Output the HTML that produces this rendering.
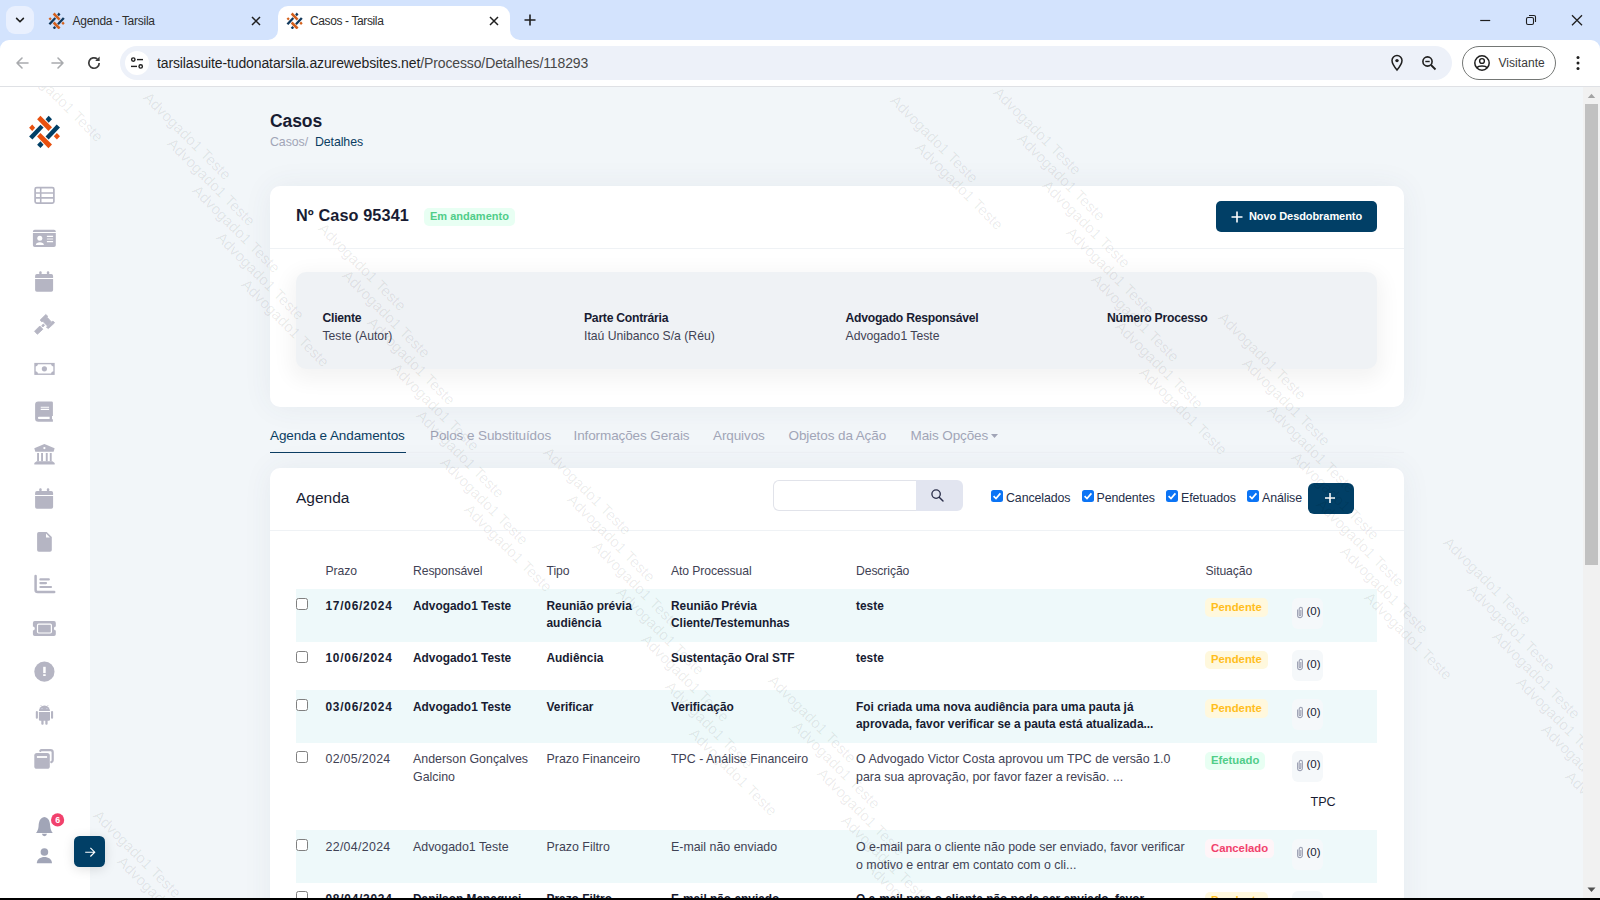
<!DOCTYPE html>
<html lang="pt-BR"><head><meta charset="utf-8"><title>Casos - Tarsila</title>
<style>
*{box-sizing:border-box}
html,body{margin:0;padding:0}
body{width:1600px;height:900px;overflow:hidden;position:relative;background:#fff;font-family:"Liberation Sans",sans-serif;color:#181c32}
.abs{position:absolute}
.t{position:absolute;white-space:nowrap;line-height:1}
/* chrome */
#tabstrip{left:0;top:0;width:1600px;height:52px;background:#d3e3fd}
#toolbar{left:0;top:40px;width:1600px;height:46px;background:#fff;border-top-left-radius:9px;border-top-right-radius:9px}
#tbline{left:0;top:86px;width:1600px;height:1px;background:#dfe1e5}
#url{left:120px;top:46px;width:1332px;height:34px;border-radius:17px;background:#edf1f9}
/* page */
#page{left:0;top:87px;width:1583px;height:811px;background:#f2f6f9;overflow:hidden}
#side{left:0;top:0;width:90px;height:811px;background:#fff}
.card{background:#fff;border-radius:10px;box-shadow:0 0 30px rgba(60,80,110,.065)}
.badge{position:absolute;border-radius:5px;font-weight:700;white-space:nowrap}
.ck{position:absolute;width:12px;height:12px;border:1px solid #808080;border-radius:2.5px;background:#fff}
.ckc{position:absolute;width:12px;height:12px;border-radius:2.5px;background:#0b74f5}
.row{position:absolute;left:26px;width:1081px}
.cell{position:absolute;white-space:nowrap}
.b{font-weight:700;font-size:11.9px;line-height:17px;color:#181c32}
.r{font-weight:400;font-size:12.4px;line-height:18px;color:#3f4254}
.att{position:absolute;left:996px;width:31px;height:31px;border-radius:6px;background:#f5f8fa}
.wm{position:absolute;white-space:nowrap;font-size:14.9px;letter-spacing:0.12px;line-height:1;color:rgba(0,0,0,.088);transform-origin:0 0;transform:rotate(45deg);pointer-events:none}
#bottom{left:0;top:898px;width:1600px;height:2px;background:#000}
#sb{left:1583px;top:87px;width:17px;height:811px;background:#f1f1f1}
</style></head>
<body>
<div id="tabstrip" class="abs"></div>
<div class="abs" style="left:6px;top:6px;width:28px;height:28px;border-radius:9px;background:#e9f0fe"></div>
<svg class="abs" style="left:14px;top:15px" width="12" height="10" viewBox="0 0 12 10"><path d="M2.6 3.4 L6 6.8 L9.4 3.4" fill="none" stroke="#1f1f1f" stroke-width="1.6" stroke-linecap="round" stroke-linejoin="round"/></svg>
<div id="toolbar" class="abs"></div>
<div class="abs" style="left:278px;top:6px;width:232px;height:34px;background:#fff;border-radius:10px 10px 0 0"></div>
<svg class="abs" style="left:268px;top:30px" width="10" height="10"><path d="M10 0 V10 H0 A10 10 0 0 0 10 0Z" fill="#fff"/></svg>
<svg class="abs" style="left:510px;top:30px" width="10" height="10"><path d="M0 0 V10 H10 A10 10 0 0 1 0 0Z" fill="#fff"/></svg>
<div id="tbline" class="abs"></div>
<div id="url" class="abs"></div>
<svg class="abs" style="left:47.6px;top:11.6px" width="17.2" height="17.2" viewBox="4 4.6 33 33"><polygon points="16.44,5.78 13.11,9.33 24.44,20.89 28.00,17.33" fill="#d4601c"/><polygon points="16.44,22.89 13.11,26.44 24.44,38.22 28.00,34.44" fill="#d4601c"/><polygon points="16.44,14.67 5.11,26.44 8.44,29.56 19.56,17.56" fill="#12395c"/><polygon points="32.67,14.44 21.56,26.44 24.67,29.56 36.00,17.56" fill="#12395c"/><polygon points="24.67,5.78 21.56,9.33 24.67,12.67 28.00,9.33" fill="#12395c"/><polygon points="16.44,31.33 13.11,34.67 16.44,38.00 19.56,34.67" fill="#12395c"/><polygon points="8.22,14.44 5.11,17.78 8.22,20.89 11.11,17.78" fill="#d4601c"/><polygon points="32.89,22.89 29.78,26.22 32.89,29.56 36.00,26.22" fill="#d4601c"/></svg>
<svg class="abs" style="left:285.6px;top:11.6px" width="17.2" height="17.2" viewBox="4 4.6 33 33"><polygon points="16.44,5.78 13.11,9.33 24.44,20.89 28.00,17.33" fill="#d4601c"/><polygon points="16.44,22.89 13.11,26.44 24.44,38.22 28.00,34.44" fill="#d4601c"/><polygon points="16.44,14.67 5.11,26.44 8.44,29.56 19.56,17.56" fill="#12395c"/><polygon points="32.67,14.44 21.56,26.44 24.67,29.56 36.00,17.56" fill="#12395c"/><polygon points="24.67,5.78 21.56,9.33 24.67,12.67 28.00,9.33" fill="#12395c"/><polygon points="16.44,31.33 13.11,34.67 16.44,38.00 19.56,34.67" fill="#12395c"/><polygon points="8.22,14.44 5.11,17.78 8.22,20.89 11.11,17.78" fill="#d4601c"/><polygon points="32.89,22.89 29.78,26.22 32.89,29.56 36.00,26.22" fill="#d4601c"/></svg>
<div class="t" style="left:72.5px;top:15px;font-size:12px;color:#2e2e2e;letter-spacing:-0.27px">Agenda - Tarsila</div>
<div class="t" style="left:310px;top:15px;font-size:12px;color:#2e2e2e;letter-spacing:-0.38px">Casos - Tarsila</div>
<svg class="abs" style="left:248px;top:12.5px" width="16" height="16"><path d="M4 4 L12 12 M12 4 L4 12" stroke="#1f1f1f" stroke-width="1.5" fill="none"/></svg>
<svg class="abs" style="left:486px;top:12.5px" width="16" height="16"><path d="M4 4 L12 12 M12 4 L4 12" stroke="#1f1f1f" stroke-width="1.5" fill="none"/></svg>
<svg class="abs" style="left:522px;top:12px" width="16" height="16"><path d="M8 2.5 V13.5 M2.5 8 H13.5" stroke="#1f1f1f" stroke-width="1.6" fill="none"/></svg>
<svg class="abs" style="left:1478px;top:12px" width="16" height="16"><path d="M2.2 8.5 H12.2" stroke="#1f1f1f" stroke-width="1.2"/></svg>
<svg class="abs" style="left:1523px;top:12px" width="16" height="16"><rect x="3.5" y="5.5" width="7" height="7" rx="1.5" fill="none" stroke="#1f1f1f" stroke-width="1.1"/><path d="M6 3.5 H11 A1.5 1.5 0 0 1 12.5 5 V10" fill="none" stroke="#1f1f1f" stroke-width="1.1"/></svg>
<svg class="abs" style="left:1568px;top:12px" width="18" height="16"><path d="M4 3.2 L14 13.2 M14 3.2 L4 13.2" stroke="#1f1f1f" stroke-width="1.25"/></svg>
<svg class="abs" style="left:14px;top:55px" width="16" height="16"><path d="M14 8 H3 M8 3 L3 8 L8 13" fill="none" stroke="#a9abae" stroke-width="1.6" stroke-linecap="round" stroke-linejoin="round"/></svg>
<svg class="abs" style="left:50px;top:55px" width="16" height="16"><path d="M2 8 H13 M8 3 L13 8 L8 13" fill="none" stroke="#a9abae" stroke-width="1.6" stroke-linecap="round" stroke-linejoin="round"/></svg>
<svg class="abs" style="left:85px;top:54px" width="18" height="18" viewBox="0 0 18 18"><path d="M14.2 9 A5.2 5.2 0 1 1 12.3 5" fill="none" stroke="#3c3c3c" stroke-width="1.7"/><path d="M14.6 2.6 V7 H10.2 Z" fill="#3c3c3c"/></svg>
<div class="abs" style="left:125px;top:51px;width:24px;height:24px;border-radius:12px;background:#fff"></div>
<svg class="abs" style="left:129px;top:55px" width="16" height="16" viewBox="0 0 16 16"><circle cx="4.3" cy="4.6" r="1.7" fill="none" stroke="#1f1f1f" stroke-width="1.4"/><path d="M8 4.6 H14" stroke="#1f1f1f" stroke-width="1.4"/><circle cx="11.7" cy="11.4" r="1.7" fill="none" stroke="#1f1f1f" stroke-width="1.4"/><path d="M2 11.4 H8" stroke="#1f1f1f" stroke-width="1.4"/></svg>
<div class="t" style="left:157px;top:55.5px;font-size:14px;color:#1f1f1f;letter-spacing:-0.12px"><span>tarsilasuite-tudonatarsila.azurewebsites.net</span><span style="color:#474747">/Processo/Detalhes/118293</span></div>
<svg class="abs" style="left:1389px;top:54px" width="16" height="18" viewBox="0 0 16 18"><path d="M8 1.5 A5 5 0 0 1 13 6.5 C13 10 8 16 8 16 C8 16 3 10 3 6.5 A5 5 0 0 1 8 1.5Z" fill="none" stroke="#1f1f1f" stroke-width="1.5"/><circle cx="8" cy="6.6" r="1.7" fill="#1f1f1f"/></svg>
<svg class="abs" style="left:1420px;top:54px" width="18" height="18" viewBox="0 0 18 18"><circle cx="7.5" cy="7.5" r="4.6" fill="none" stroke="#1f1f1f" stroke-width="1.6"/><path d="M11 11 L15.5 15.5" stroke="#1f1f1f" stroke-width="1.8"/><path d="M5.3 7.5 H9.7" stroke="#1f1f1f" stroke-width="1.4"/></svg>
<div class="abs" style="left:1462px;top:46px;width:94px;height:34px;border-radius:17px;border:1px solid #747775;background:#fff"></div>
<svg class="abs" style="left:1473px;top:54px" width="18" height="18" viewBox="0 0 18 18"><circle cx="9" cy="9" r="7.2" fill="none" stroke="#1f1f1f" stroke-width="1.5"/><circle cx="9" cy="7" r="2.4" fill="none" stroke="#1f1f1f" stroke-width="1.4"/><path d="M3.9 13.8 C5.5 11.4 12.5 11.4 14.1 13.8" fill="none" stroke="#1f1f1f" stroke-width="1.4"/></svg>
<div class="t" style="left:1498.5px;top:57px;font-size:12px;color:#3a3a3a;letter-spacing:0.05px">Visitante</div>
<svg class="abs" style="left:1570px;top:54px" width="16" height="18"><circle cx="8" cy="3.5" r="1.5" fill="#1f1f1f"/><circle cx="8" cy="9" r="1.5" fill="#1f1f1f"/><circle cx="8" cy="14.5" r="1.5" fill="#1f1f1f"/></svg>
<div id="page" class="abs">
<div class="abs card" style="left:270px;top:99px;width:1134px;height:221px"></div>
<div class="abs card" style="left:270px;top:381px;width:1134px;height:600px"></div>
<div id="side" class="abs"></div>
<div class="t" style="left:270px;top:26px;font-size:17.5px;font-weight:700;color:#181c32;letter-spacing:-0.1px;">Casos</div>
<div class="t" style="left:270px;top:49px;font-size:12.35px;font-weight:400;color:#a1a5b7;letter-spacing:-0.07px;">Casos/</div>
<div class="t" style="left:315px;top:49px;font-size:12.35px;font-weight:400;color:#0b3d62;letter-spacing:-0.09px;">Detalhes</div>
<div class="t" style="left:296px;top:120px;font-size:16.25px;font-weight:700;color:#181c32;letter-spacing:0.1px;">Nº Caso 95341</div>
<div class="badge" style="left:424px;top:120.5px;width:90.5px;height:18px;background:#e8fff3"></div>
<div class="t" style="left:430px;top:124px;font-size:11px;font-weight:700;color:#50cd89;letter-spacing:0px;">Em andamento</div>
<div class="abs" style="left:1216px;top:114px;width:161px;height:31px;border-radius:5px;background:#013f66"></div>
<svg class="abs" style="left:1231px;top:124px" width="12" height="12"><path d="M6 0.5 V11.5 M0.5 6 H11.5" stroke="#fff" stroke-width="1.6"/></svg>
<div class="t" style="left:1249px;top:124px;font-size:11px;font-weight:700;color:#fff;letter-spacing:-0.07px;">Novo Desdobramento</div>
<div class="abs" style="left:270px;top:161px;width:1134px;height:1px;background:#eff2f5"></div>
<div class="abs" style="left:296px;top:185px;width:1081px;height:97px;border-radius:10px;background:#eff2f5;box-shadow:0 6px 20px 6px rgba(0,0,0,.047)"></div>
<div class="t" style="left:322.5px;top:225px;font-size:12.2px;font-weight:700;color:#181c32;letter-spacing:-0.26px;">Cliente</div>
<div class="t" style="left:322.5px;top:243px;font-size:12.2px;font-weight:400;color:#3f4254;letter-spacing:0px;">Teste (Autor)</div>
<div class="t" style="left:584px;top:225px;font-size:12.2px;font-weight:700;color:#181c32;letter-spacing:-0.26px;">Parte Contrária</div>
<div class="t" style="left:584px;top:243px;font-size:12.2px;font-weight:400;color:#3f4254;letter-spacing:0px;">Itaú Unibanco S/a (Réu)</div>
<div class="t" style="left:845.5px;top:225px;font-size:12.2px;font-weight:700;color:#181c32;letter-spacing:-0.26px;">Advogado Responsável</div>
<div class="t" style="left:845.5px;top:243px;font-size:12.2px;font-weight:400;color:#3f4254;letter-spacing:0px;">Advogado1 Teste</div>
<div class="t" style="left:1107px;top:225px;font-size:12.2px;font-weight:700;color:#181c32;letter-spacing:-0.26px;">Número Processo</div>
<div class="abs" style="left:270px;top:365px;width:1134px;height:1px;background:#eceff3"></div>
<div class="t" style="left:270px;top:342px;font-size:13.5px;font-weight:400;color:#0b3d62;letter-spacing:-0.1px;">Agenda e Andamentos</div>
<div class="t" style="left:430px;top:342px;font-size:13.5px;font-weight:400;color:#a1a5b7;letter-spacing:-0.1px;">Polos e Substituídos</div>
<div class="t" style="left:573.5px;top:342px;font-size:13.5px;font-weight:400;color:#a1a5b7;letter-spacing:-0.1px;">Informações Gerais</div>
<div class="t" style="left:713px;top:342px;font-size:13.5px;font-weight:400;color:#a1a5b7;letter-spacing:-0.1px;">Arquivos</div>
<div class="t" style="left:788.5px;top:342px;font-size:13.5px;font-weight:400;color:#a1a5b7;letter-spacing:-0.1px;">Objetos da Ação</div>
<div class="t" style="left:910.5px;top:342px;font-size:13.5px;font-weight:400;color:#a1a5b7;letter-spacing:-0.1px;">Mais Opções</div>
<div class="abs" style="left:270px;top:364.5px;width:136px;height:1.5px;background:#0b3d62"></div>
<svg class="abs" style="left:991px;top:347px" width="7" height="4"><path d="M0 0 H7 L3.5 4Z" fill="#a1a5b7"/></svg>
<div class="t" style="left:296px;top:403px;font-size:15.5px;font-weight:400;color:#181c32;letter-spacing:0px;">Agenda</div>
<div class="abs" style="left:773px;top:393px;width:144px;height:31px;border:1px solid #e1e3ea;border-right:none;border-radius:6px 0 0 6px;background:#fff"></div>
<div class="abs" style="left:916px;top:393px;width:47px;height:31px;border-radius:0 6px 6px 0;background:#e2e5f0"></div>
<svg class="abs" style="left:930px;top:401px" width="15" height="15" viewBox="0 0 15 15"><circle cx="6.1" cy="6.1" r="4.2" fill="none" stroke="#2b2f4a" stroke-width="1.35"/><path d="M9.2 9.2 L13 13" stroke="#2b2f4a" stroke-width="1.45" stroke-linecap="round"/></svg>
<div class="ckc" style="left:991px;top:402.5px"></div><svg class="abs" style="left:991px;top:402.5px" width="12" height="12"><path d="M2.6 6.2 L5 8.6 L9.4 3.4" fill="none" stroke="#fff" stroke-width="1.7"/></svg>
<div class="t" style="left:1006px;top:404.5px;font-size:12.4px;font-weight:400;color:#252f4a;letter-spacing:-0.1px;">Cancelados</div>
<div class="ckc" style="left:1082px;top:402.5px"></div><svg class="abs" style="left:1082px;top:402.5px" width="12" height="12"><path d="M2.6 6.2 L5 8.6 L9.4 3.4" fill="none" stroke="#fff" stroke-width="1.7"/></svg>
<div class="t" style="left:1096.5px;top:404.5px;font-size:12.4px;font-weight:400;color:#252f4a;letter-spacing:-0.1px;">Pendentes</div>
<div class="ckc" style="left:1166px;top:402.5px"></div><svg class="abs" style="left:1166px;top:402.5px" width="12" height="12"><path d="M2.6 6.2 L5 8.6 L9.4 3.4" fill="none" stroke="#fff" stroke-width="1.7"/></svg>
<div class="t" style="left:1181px;top:404.5px;font-size:12.4px;font-weight:400;color:#252f4a;letter-spacing:-0.1px;">Efetuados</div>
<div class="ckc" style="left:1247px;top:402.5px"></div><svg class="abs" style="left:1247px;top:402.5px" width="12" height="12"><path d="M2.6 6.2 L5 8.6 L9.4 3.4" fill="none" stroke="#fff" stroke-width="1.7"/></svg>
<div class="t" style="left:1262px;top:404.5px;font-size:12.4px;font-weight:400;color:#252f4a;letter-spacing:-0.1px;">Análise</div>
<div class="abs" style="left:1308px;top:396px;width:46px;height:31px;border-radius:6px;background:#013f66"></div>
<svg class="abs" style="left:1324px;top:405px" width="12" height="12"><path d="M6 1 V11 M1 6 H11" stroke="#fff" stroke-width="1.6"/></svg>
<div class="abs" style="left:270px;top:443px;width:1134px;height:1px;background:#eff2f5"></div>
<div class="t" style="left:325.5px;top:478px;font-size:12.2px;font-weight:400;color:#3f4254;letter-spacing:-0.1px;">Prazo</div>
<div class="t" style="left:413px;top:478px;font-size:12.2px;font-weight:400;color:#3f4254;letter-spacing:-0.1px;">Responsável</div>
<div class="t" style="left:546.5px;top:478px;font-size:12.2px;font-weight:400;color:#3f4254;letter-spacing:-0.1px;">Tipo</div>
<div class="t" style="left:671px;top:478px;font-size:12.2px;font-weight:400;color:#3f4254;letter-spacing:-0.1px;">Ato Processual</div>
<div class="t" style="left:856px;top:478px;font-size:12.2px;font-weight:400;color:#3f4254;letter-spacing:-0.1px;">Descrição</div>
<div class="t" style="left:1205.5px;top:478px;font-size:12.2px;font-weight:400;color:#3f4254;letter-spacing:-0.1px;">Situação</div>
<div class="abs" style="left:296px;top:502.25px;width:1081px;height:52.5px;background:#eef9fa"></div>
<div class="ck" style="left:296px;top:511.04999999999995px"></div>
<div class="cell b" style="left:325.5px;top:510.75px;letter-spacing:0.75px;">17/06/2024</div>
<div class="cell b" style="left:413px;top:510.75px;">Advogado1 Teste</div>
<div class="cell b" style="left:546.5px;top:510.75px;">Reunião prévia<br>audiência</div>
<div class="cell b" style="left:671px;top:510.75px;">Reunião Prévia<br>Cliente/Testemunhas</div>
<div class="cell b" style="left:856px;top:510.75px;">teste</div>
<div class="badge" style="left:1205px;top:511.25px;width:62.5px;height:18.5px;background:#fff8dd"></div>
<div class="t" style="left:1211px;top:514.75px;font-size:11.3px;font-weight:700;color:#ffbe1c;letter-spacing:0px;">Pendente</div>
<div class="att" style="left:1292px;top:510.75px"></div>
<svg class="abs" style="left:1296px;top:518.55px" width="8" height="13" viewBox="0 0 8 13"><path d="M1.6 3.5 V9.2 A2.4 2.4 0 0 0 6.4 9.2 V3 A1.6 1.6 0 0 0 3.2 3 V8.8 A0.8 0.8 0 0 0 4.8 8.8 V4" fill="none" stroke="#9ca0b3" stroke-width="1.1"/></svg>
<div class="t" style="left:1306.5px;top:519.15px;font-size:11.5px;font-weight:400;color:#181c32;letter-spacing:0px;">(0)</div>
<div class="ck" style="left:296px;top:563.55px"></div>
<div class="cell b" style="left:325.5px;top:563.25px;letter-spacing:0.75px;">10/06/2024</div>
<div class="cell b" style="left:413px;top:563.25px;">Advogado1 Teste</div>
<div class="cell b" style="left:546.5px;top:563.25px;">Audiência</div>
<div class="cell b" style="left:671px;top:563.25px;">Sustentação Oral STF</div>
<div class="cell b" style="left:856px;top:563.25px;">teste</div>
<div class="badge" style="left:1205px;top:563.75px;width:62.5px;height:18.5px;background:#fff8dd"></div>
<div class="t" style="left:1211px;top:567.25px;font-size:11.3px;font-weight:700;color:#ffbe1c;letter-spacing:0px;">Pendente</div>
<div class="att" style="left:1292px;top:563.25px"></div>
<svg class="abs" style="left:1296px;top:571.05px" width="8" height="13" viewBox="0 0 8 13"><path d="M1.6 3.5 V9.2 A2.4 2.4 0 0 0 6.4 9.2 V3 A1.6 1.6 0 0 0 3.2 3 V8.8 A0.8 0.8 0 0 0 4.8 8.8 V4" fill="none" stroke="#9ca0b3" stroke-width="1.1"/></svg>
<div class="t" style="left:1306.5px;top:571.65px;font-size:11.5px;font-weight:400;color:#181c32;letter-spacing:0px;">(0)</div>
<div class="abs" style="left:296px;top:603px;width:1081px;height:52.5px;background:#eef9fa"></div>
<div class="ck" style="left:296px;top:611.8px"></div>
<div class="cell b" style="left:325.5px;top:611.5px;letter-spacing:0.75px;">03/06/2024</div>
<div class="cell b" style="left:413px;top:611.5px;">Advogado1 Teste</div>
<div class="cell b" style="left:546.5px;top:611.5px;">Verificar</div>
<div class="cell b" style="left:671px;top:611.5px;">Verificação</div>
<div class="cell b" style="left:856px;top:611.5px;">Foi criada uma nova audiência para uma pauta já<br>aprovada, favor verificar se a pauta está atualizada...</div>
<div class="badge" style="left:1205px;top:612px;width:62.5px;height:18.5px;background:#fff8dd"></div>
<div class="t" style="left:1211px;top:615.5px;font-size:11.3px;font-weight:700;color:#ffbe1c;letter-spacing:0px;">Pendente</div>
<div class="att" style="left:1292px;top:611.5px"></div>
<svg class="abs" style="left:1296px;top:619.3px" width="8" height="13" viewBox="0 0 8 13"><path d="M1.6 3.5 V9.2 A2.4 2.4 0 0 0 6.4 9.2 V3 A1.6 1.6 0 0 0 3.2 3 V8.8 A0.8 0.8 0 0 0 4.8 8.8 V4" fill="none" stroke="#9ca0b3" stroke-width="1.1"/></svg>
<div class="t" style="left:1306.5px;top:619.9px;font-size:11.5px;font-weight:400;color:#181c32;letter-spacing:0px;">(0)</div>
<div class="ck" style="left:296px;top:664.3px"></div>
<div class="cell r" style="left:325.5px;top:663.0px;letter-spacing:0.3px;">02/05/2024</div>
<div class="cell r" style="left:413px;top:663.0px;">Anderson Gonçalves<br>Galcino</div>
<div class="cell r" style="left:546.5px;top:663.0px;">Prazo Financeiro</div>
<div class="cell r" style="left:671px;top:663.0px;">TPC - Análise Financeiro</div>
<div class="cell r" style="left:856px;top:663.0px;">O Advogado Victor Costa aprovou um TPC de versão 1.0<br>para sua aprovação, por favor fazer a revisão. ...</div>
<div class="badge" style="left:1205px;top:664.5px;width:60px;height:18.5px;background:#e8fff3"></div>
<div class="t" style="left:1211px;top:668.0px;font-size:11.3px;font-weight:700;color:#50cd89;letter-spacing:0px;">Efetuado</div>
<div class="att" style="left:1292px;top:664.0px"></div>
<svg class="abs" style="left:1296px;top:671.8px" width="8" height="13" viewBox="0 0 8 13"><path d="M1.6 3.5 V9.2 A2.4 2.4 0 0 0 6.4 9.2 V3 A1.6 1.6 0 0 0 3.2 3 V8.8 A0.8 0.8 0 0 0 4.8 8.8 V4" fill="none" stroke="#9ca0b3" stroke-width="1.1"/></svg>
<div class="t" style="left:1306.5px;top:672.4px;font-size:11.5px;font-weight:400;color:#181c32;letter-spacing:0px;">(0)</div>
<div class="t" style="left:1310.5px;top:708.5px;font-size:12.6px;font-weight:400;color:#181c32;letter-spacing:0px;">TPC</div>
<div class="abs" style="left:296px;top:743px;width:1081px;height:52.5px;background:#eef9fa"></div>
<div class="ck" style="left:296px;top:751.8px"></div>
<div class="cell r" style="left:325.5px;top:751px;letter-spacing:0.3px;">22/04/2024</div>
<div class="cell r" style="left:413px;top:751px;">Advogado1 Teste</div>
<div class="cell r" style="left:546.5px;top:751px;">Prazo Filtro</div>
<div class="cell r" style="left:671px;top:751px;">E-mail não enviado</div>
<div class="cell r" style="left:856px;top:751px;">O e-mail para o cliente não pode ser enviado, favor verificar<br>o motivo e entrar em contato com o cli...</div>
<div class="badge" style="left:1205px;top:752px;width:68.5px;height:18.5px;background:#fff5f8"></div>
<div class="t" style="left:1211px;top:755.5px;font-size:11.3px;font-weight:700;color:#f1416c;letter-spacing:0px;">Cancelado</div>
<div class="att" style="left:1292px;top:751.5px"></div>
<svg class="abs" style="left:1296px;top:759.3px" width="8" height="13" viewBox="0 0 8 13"><path d="M1.6 3.5 V9.2 A2.4 2.4 0 0 0 6.4 9.2 V3 A1.6 1.6 0 0 0 3.2 3 V8.8 A0.8 0.8 0 0 0 4.8 8.8 V4" fill="none" stroke="#9ca0b3" stroke-width="1.1"/></svg>
<div class="t" style="left:1306.5px;top:759.9px;font-size:11.5px;font-weight:400;color:#181c32;letter-spacing:0px;">(0)</div>
<div class="ck" style="left:296px;top:804.3px"></div>
<div class="cell b" style="left:325.5px;top:804.0px;letter-spacing:0.75px;">08/04/2024</div>
<div class="cell b" style="left:413px;top:804.0px;">Danilson Meneguci</div>
<div class="cell b" style="left:546.5px;top:804.0px;">Prazo Filtro</div>
<div class="cell b" style="left:671px;top:804.0px;">E-mail não enviado</div>
<div class="cell b" style="left:856px;top:804.0px;">O e-mail para o cliente não pode ser enviado, favor<br>verificar o motivo</div>
<div class="badge" style="left:1205px;top:804.5px;width:62.5px;height:18.5px;background:#fff8dd"></div>
<div class="t" style="left:1211px;top:808.0px;font-size:11.3px;font-weight:700;color:#ffbe1c;letter-spacing:0px;">Pendente</div>
<div class="att" style="left:1292px;top:804.0px"></div>
<svg class="abs" style="left:1296px;top:811.8px" width="8" height="13" viewBox="0 0 8 13"><path d="M1.6 3.5 V9.2 A2.4 2.4 0 0 0 6.4 9.2 V3 A1.6 1.6 0 0 0 3.2 3 V8.8 A0.8 0.8 0 0 0 4.8 8.8 V4" fill="none" stroke="#9ca0b3" stroke-width="1.1"/></svg>
<div class="t" style="left:1306.5px;top:812.4px;font-size:11.5px;font-weight:400;color:#181c32;letter-spacing:0px;">(0)</div>
<svg class="abs" style="left:24px;top:23px" width="40" height="40" viewBox="0 0 40 40"><polygon points="16.44,5.78 13.11,9.33 24.44,20.89 28.00,17.33" fill="#e8500f"/><polygon points="16.44,22.89 13.11,26.44 24.44,38.22 28.00,34.44" fill="#e8500f"/><polygon points="16.44,14.67 5.11,26.44 8.44,29.56 19.56,17.56" fill="#013f66"/><polygon points="32.67,14.44 21.56,26.44 24.67,29.56 36.00,17.56" fill="#013f66"/><polygon points="24.67,5.78 21.56,9.33 24.67,12.67 28.00,9.33" fill="#013f66"/><polygon points="16.44,31.33 13.11,34.67 16.44,38.00 19.56,34.67" fill="#013f66"/><polygon points="8.22,14.44 5.11,17.78 8.22,20.89 11.11,17.78" fill="#e8500f"/><polygon points="32.89,22.89 29.78,26.22 32.89,29.56 36.00,26.22" fill="#e8500f"/></svg>
<svg class="abs" style="left:24px;top:88px" width="40" height="40" viewBox="0 0 40 40"><rect x="11.1" y="12.7" width="18.8" height="15.4" rx="1.6" fill="none" stroke="#b5b5c3" stroke-width="1.7"/><path d="M16.7 12.7 V28.1 M11.1 18 H29.9 M11.1 22.9 H29.9" stroke="#b5b5c3" stroke-width="1.6" fill="none"/></svg>
<svg class="abs" style="left:24px;top:131px" width="40" height="40" viewBox="0 0 40 40"><path d="M8.9 13.6 A1.8 1.8 0 0 1 10.7 11.8 H30 A1.8 1.8 0 0 1 31.8 13.6 V13.9 H8.9Z" fill="#b5b5c3"/><path d="M8.9 15 H31.8 V27.3 A1.8 1.8 0 0 1 30 29.1 H10.7 A1.8 1.8 0 0 1 8.9 27.3Z" fill="#b5b5c3"/><circle cx="15.8" cy="20.2" r="2.5" fill="#fff"/><path d="M11.8 26.9 C11.8 23.4 19.9 23.4 19.9 26.9Z" fill="#fff"/><path d="M22.9 18.4 H29.1 M22.9 23.6 H29.1" stroke="#fff" stroke-width="1.1"/><path d="M22.9 21 H29.1" stroke="#fff" stroke-width="1.1" opacity=".75"/></svg>
<svg class="abs" style="left:24px;top:174px" width="40" height="40" viewBox="0 0 40 40"><rect x="15.3" y="10.2" width="2.3" height="4" rx="1" fill="#b5b5c3"/><rect x="22.9" y="10.2" width="2.3" height="4" rx="1" fill="#b5b5c3"/><path d="M11.1 14.9 A1.8 1.8 0 0 1 12.9 13.1 H27.3 A1.8 1.8 0 0 1 29.1 14.9 V16.9 H11.1Z" fill="#b5b5c3"/><path d="M11.1 18.1 H29.1 V28.9 A1.8 1.8 0 0 1 27.3 30.7 H12.9 A1.8 1.8 0 0 1 11.1 28.9Z" fill="#b5b5c3"/></svg>
<svg class="abs" style="left:24px;top:218px" width="40" height="40" viewBox="0 0 40 40"><g fill="#b5b5c3" stroke="#b5b5c3" stroke-width="0.8" stroke-linejoin="round"><polygon points="21.8,9.5 16.1,15.1 17.9,17 23.8,11.3"/><polygon points="23.1,12.2 18.9,16.3 23.3,20.9 27.4,16.9"/><polygon points="28.9,16 22.4,22.2 24.3,23.6 30.6,17.8"/><polygon points="19.3,19 17.6,20.7 18.9,22 20.6,20.3"/><polygon points="15.8,21 10.5,26.3 13.4,29.3 18.9,24.2"/></g></svg>
<svg class="abs" style="left:24px;top:261px" width="40" height="40" viewBox="0 0 40 40"><rect x="11" y="15.6" width="19" height="10.6" fill="none" stroke="#b5b5c3" stroke-width="1.4"/><path d="M11 15.6 H14 A3 3 0 0 1 11 18.6Z M30 15.6 V18.6 A3 3 0 0 1 27 15.6Z M11 26.2 V23.2 A3 3 0 0 1 14 26.2Z M30 26.2 H27 A3 3 0 0 1 30 23.2Z" fill="#b5b5c3"/><circle cx="20.4" cy="20.8" r="2.6" fill="#b5b5c3"/></svg>
<svg class="abs" style="left:24px;top:304px" width="40" height="40" viewBox="0 0 40 40"><path d="M11.1 13.6 A3.2 3.2 0 0 1 14.3 10.4 H27.6 A1.3 1.3 0 0 1 28.9 11.7 V25 H28 V28.3 H28.9 V30.7 H14.3 A3.2 3.2 0 0 1 11.1 27.5Z" fill="#b5b5c3"/><path d="M16.7 16.2 H25.1 M16.7 18.4 H25.1" stroke="#fff" stroke-width="1.1"/><path d="M15 25.8 H25.6 V28 H15 A1.1 1.1 0 0 1 15 25.8Z" fill="#fff"/></svg>
<svg class="abs" style="left:24px;top:348px" width="40" height="40" viewBox="0 0 40 40"><path d="M20.4 9 L30.6 13.3 L29.6 16.7 H11.3 L10.3 13.3Z" fill="#b5b5c3"/><circle cx="20.4" cy="13.1" r="1.15" fill="#fff"/><rect x="13.1" y="18" width="1.9" height="8.3" fill="#b5b5c3"/><rect x="17.1" y="18" width="1.9" height="8.3" fill="#b5b5c3"/><rect x="21.8" y="18" width="1.9" height="8.3" fill="#b5b5c3"/><rect x="25.8" y="18" width="1.9" height="8.3" fill="#b5b5c3"/><path d="M12.6 26.2 H28.4 L30.7 28 V29.6 H10.3 V28Z" fill="#b5b5c3"/></svg>
<svg class="abs" style="left:24px;top:391px" width="40" height="40" viewBox="0 0 40 40"><rect x="15.3" y="10.2" width="2.3" height="4" rx="1" fill="#b5b5c3"/><rect x="22.9" y="10.2" width="2.3" height="4" rx="1" fill="#b5b5c3"/><path d="M11.1 14.9 A1.8 1.8 0 0 1 12.9 13.1 H27.3 A1.8 1.8 0 0 1 29.1 14.9 V16.9 H11.1Z" fill="#b5b5c3"/><path d="M11.1 18.1 H29.1 V28.9 A1.8 1.8 0 0 1 27.3 30.7 H12.9 A1.8 1.8 0 0 1 11.1 28.9Z" fill="#b5b5c3"/></svg>
<svg class="abs" style="left:24px;top:434px" width="40" height="40" viewBox="0 0 40 40"><path d="M13.1 12.7 A1.8 1.8 0 0 1 14.9 10.9 H22.7 L27.8 16 V28.9 A1.8 1.8 0 0 1 26 30.7 H14.9 A1.8 1.8 0 0 1 13.1 28.9Z" fill="#b5b5c3"/><path d="M22 12.6 V16.5 H25.9Z" fill="#fff"/></svg>
<svg class="abs" style="left:24px;top:478px" width="40" height="40" viewBox="0 0 40 40"><path d="M11.6 11.1 V24.9 A2 2 0 0 0 13.6 26.9 H30.2" fill="none" stroke="#b5b5c3" stroke-width="2.5" stroke-linecap="round"/><path d="M16.4 14.4 H24.8 M16.4 18.1 H22 M16.4 22 H27" stroke="#b5b5c3" stroke-width="2.2" stroke-linecap="round"/></svg>
<svg class="abs" style="left:24px;top:521px" width="40" height="40" viewBox="0 0 40 40"><path d="M8.9 14.9 A1.8 1.8 0 0 1 10.7 13.1 H30 A1.8 1.8 0 0 1 31.8 14.9 V18.6 A1.9 1.9 0 0 0 31.8 22.4 V26.2 A1.8 1.8 0 0 1 30 28 H10.7 A1.8 1.8 0 0 1 8.9 26.2 V22.4 A1.9 1.9 0 0 0 8.9 18.6Z" fill="#b5b5c3"/><rect x="13.5" y="16.2" width="13.9" height="8.8" rx="1.2" fill="none" stroke="#fff" stroke-width="1.2"/></svg>
<svg class="abs" style="left:24px;top:564px" width="40" height="40" viewBox="0 0 40 40"><circle cx="20.4" cy="20.7" r="10.1" fill="#b5b5c3"/><rect x="19.2" y="15.8" width="2.5" height="6.3" fill="#fff"/><rect x="19.2" y="23.2" width="2.5" height="1.8" fill="#fff"/></svg>
<svg class="abs" style="left:24px;top:607px" width="40" height="40" viewBox="0 0 40 40"><path d="M14.9 16.9 A5.55 5.3 0 0 1 26 16.9Z" fill="#b5b5c3"/><path d="M16.7 11.1 L17.8 12.6 M24.2 11.1 L23.1 12.6" stroke="#b5b5c3" stroke-width="0.7"/><circle cx="18" cy="14.6" r="0.55" fill="#d8dcee"/><circle cx="22.9" cy="14.6" r="0.55" fill="#d8dcee"/><path d="M14.9 18 H26 V25.5 A1.2 1.2 0 0 1 24.8 26.7 H16.1 A1.2 1.2 0 0 1 14.9 25.5Z" fill="#b5b5c3"/><rect x="11.8" y="17.1" width="2.1" height="7.6" rx="1" fill="#b5b5c3"/><rect x="27" y="17.1" width="2.1" height="7.6" rx="1" fill="#b5b5c3"/><rect x="17.3" y="25.5" width="2.3" height="5.2" rx="1" fill="#b5b5c3"/><rect x="21.3" y="25.5" width="2.3" height="5.2" rx="1" fill="#b5b5c3"/></svg>
<svg class="abs" style="left:24px;top:650px" width="40" height="40" viewBox="0 0 40 40"><rect x="10.3" y="16" width="15.5" height="15.8" rx="2.6" fill="#b5b5c3"/><rect x="12.9" y="19.1" width="10.2" height="1.8" fill="#fff"/><path d="M16.3 13.8 V13.8 A1.7 1.7 0 0 1 18 13.1 H26.5 A2.2 2.2 0 0 1 28.7 15.3 V23.2 A2 2 0 0 1 27.3 25.1" fill="none" stroke="#b5b5c3" stroke-width="2.2" stroke-linecap="round"/></svg>
<svg class="abs" style="left:30px;top:725px" width="36" height="30" viewBox="0 0 36 30"><path d="M14.4 4.9 C9.6 5.6 8.9 10 8.6 14 C8.4 17 7.4 19.5 6 21 H22.8 C21.4 19.5 20.4 17 20.2 14 C19.9 10 19.2 5.6 14.4 4.9Z" fill="#a1a5b7"/><path d="M11.9 21.8 A2.6 3.1 0 0 0 17 21.8Z" fill="#a1a5b7"/><circle cx="27.6" cy="7.9" r="6.6" fill="#f1416c"/><text x="27.6" y="11" font-family="Liberation Sans, sans-serif" font-size="8.8" font-weight="700" fill="#fff" text-anchor="middle">6</text></svg>
<svg class="abs" style="left:30px;top:755px" width="30" height="26" viewBox="0 0 30 26"><circle cx="14.4" cy="10" r="3.8" fill="#a1a5b7"/><path d="M6.8 21.3 C6.8 12.8 22 12.8 22 21.3Z" fill="#a1a5b7"/></svg>
<div class="abs" style="left:74.3px;top:749.2px;width:31.2px;height:31.2px;border-radius:5.5px;background:#013f66;box-shadow:0 2px 12px rgba(0,0,0,.13)"></div>
<svg class="abs" style="left:81.8px;top:756.5px" width="16" height="16" viewBox="0 0 16 16"><path d="M3.2 8.2 H12.4 M8.4 3.9 L12.7 8.2 L8.4 12.5" fill="none" stroke="#fff" stroke-width="1.15"/></svg>
<div class="wm" style="left:150.7px;top:2.5px">Advogado1 Teste</div>
<div class="wm" style="left:175.1px;top:49.3px">Advogado1 Teste</div>
<div class="wm" style="left:199.6px;top:96.1px">Advogado1 Teste</div>
<div class="wm" style="left:224.0px;top:142.9px">Advogado1 Teste</div>
<div class="wm" style="left:248.5px;top:189.7px">Advogado1 Teste</div>
<div class="wm" style="left:23.2px;top:-35.0px">Advogado1 Teste</div>
<div class="wm" style="left:325.7px;top:134.0px">Advogado1 Teste</div>
<div class="wm" style="left:350.1px;top:180.8px">Advogado1 Teste</div>
<div class="wm" style="left:374.6px;top:227.6px">Advogado1 Teste</div>
<div class="wm" style="left:399.1px;top:274.4px">Advogado1 Teste</div>
<div class="wm" style="left:423.5px;top:321.2px">Advogado1 Teste</div>
<div class="wm" style="left:447.9px;top:368.0px">Advogado1 Teste</div>
<div class="wm" style="left:472.4px;top:414.8px">Advogado1 Teste</div>
<div class="wm" style="left:550.7px;top:358.0px">Advogado1 Teste</div>
<div class="wm" style="left:575.2px;top:404.8px">Advogado1 Teste</div>
<div class="wm" style="left:599.6px;top:451.6px">Advogado1 Teste</div>
<div class="wm" style="left:624.1px;top:498.4px">Advogado1 Teste</div>
<div class="wm" style="left:648.5px;top:545.2px">Advogado1 Teste</div>
<div class="wm" style="left:673.0px;top:592.0px">Advogado1 Teste</div>
<div class="wm" style="left:697.4px;top:638.8px">Advogado1 Teste</div>
<div class="wm" style="left:898.2px;top:6.0px">Advogado1 Teste</div>
<div class="wm" style="left:922.7px;top:52.8px">Advogado1 Teste</div>
<div class="wm" style="left:1000.7px;top:-2.5px">Advogado1 Teste</div>
<div class="wm" style="left:1025.2px;top:44.3px">Advogado1 Teste</div>
<div class="wm" style="left:1049.6px;top:91.1px">Advogado1 Teste</div>
<div class="wm" style="left:1074.0px;top:137.9px">Advogado1 Teste</div>
<div class="wm" style="left:1098.5px;top:184.7px">Advogado1 Teste</div>
<div class="wm" style="left:1123.0px;top:231.5px">Advogado1 Teste</div>
<div class="wm" style="left:1147.4px;top:278.3px">Advogado1 Teste</div>
<div class="wm" style="left:1225.7px;top:222.5px">Advogado1 Teste</div>
<div class="wm" style="left:1250.2px;top:269.3px">Advogado1 Teste</div>
<div class="wm" style="left:1274.6px;top:316.1px">Advogado1 Teste</div>
<div class="wm" style="left:1299.0px;top:362.9px">Advogado1 Teste</div>
<div class="wm" style="left:1323.5px;top:409.7px">Advogado1 Teste</div>
<div class="wm" style="left:1348.0px;top:456.5px">Advogado1 Teste</div>
<div class="wm" style="left:1372.4px;top:503.3px">Advogado1 Teste</div>
<div class="wm" style="left:775.7px;top:585.5px">Advogado1 Teste</div>
<div class="wm" style="left:800.2px;top:632.3px">Advogado1 Teste</div>
<div class="wm" style="left:824.6px;top:679.1px">Advogado1 Teste</div>
<div class="wm" style="left:849.1px;top:725.9px">Advogado1 Teste</div>
<div class="wm" style="left:873.5px;top:772.7px">Advogado1 Teste</div>
<div class="wm" style="left:898.0px;top:819.5px">Advogado1 Teste</div>
<div class="wm" style="left:100.7px;top:720.5px">Advogado1 Teste</div>
<div class="wm" style="left:125.2px;top:767.3px">Advogado1 Teste</div>
<div class="wm" style="left:149.6px;top:814.1px">Advogado1 Teste</div>
<div class="wm" style="left:1450.7px;top:448.0px">Advogado1 Teste</div>
<div class="wm" style="left:1475.2px;top:494.8px">Advogado1 Teste</div>
<div class="wm" style="left:1499.6px;top:541.6px">Advogado1 Teste</div>
<div class="wm" style="left:1524.0px;top:588.4px">Advogado1 Teste</div>
<div class="wm" style="left:1548.5px;top:635.2px">Advogado1 Teste</div>
<div class="wm" style="left:1573.0px;top:682.0px">Advogado1 Teste</div>
<div class="wm" style="left:1597.4px;top:728.8px">Advogado1 Teste</div>
</div>
<div id="sb" class="abs"></div>
<div class="abs" style="left:1585px;top:104px;width:13px;height:461px;background:#c1c1c1"></div>
<svg class="abs" style="left:1583px;top:87px" width="17" height="17"><path d="M4.8 11 L8.5 6.8 L12.2 11Z" fill="#a3a3a3"/></svg>
<svg class="abs" style="left:1583px;top:881px" width="17" height="17"><path d="M4.5 6.5 L8.5 11 L12.5 6.5Z" fill="#505050"/></svg>
<div id="bottom" class="abs"></div>
</body></html>
